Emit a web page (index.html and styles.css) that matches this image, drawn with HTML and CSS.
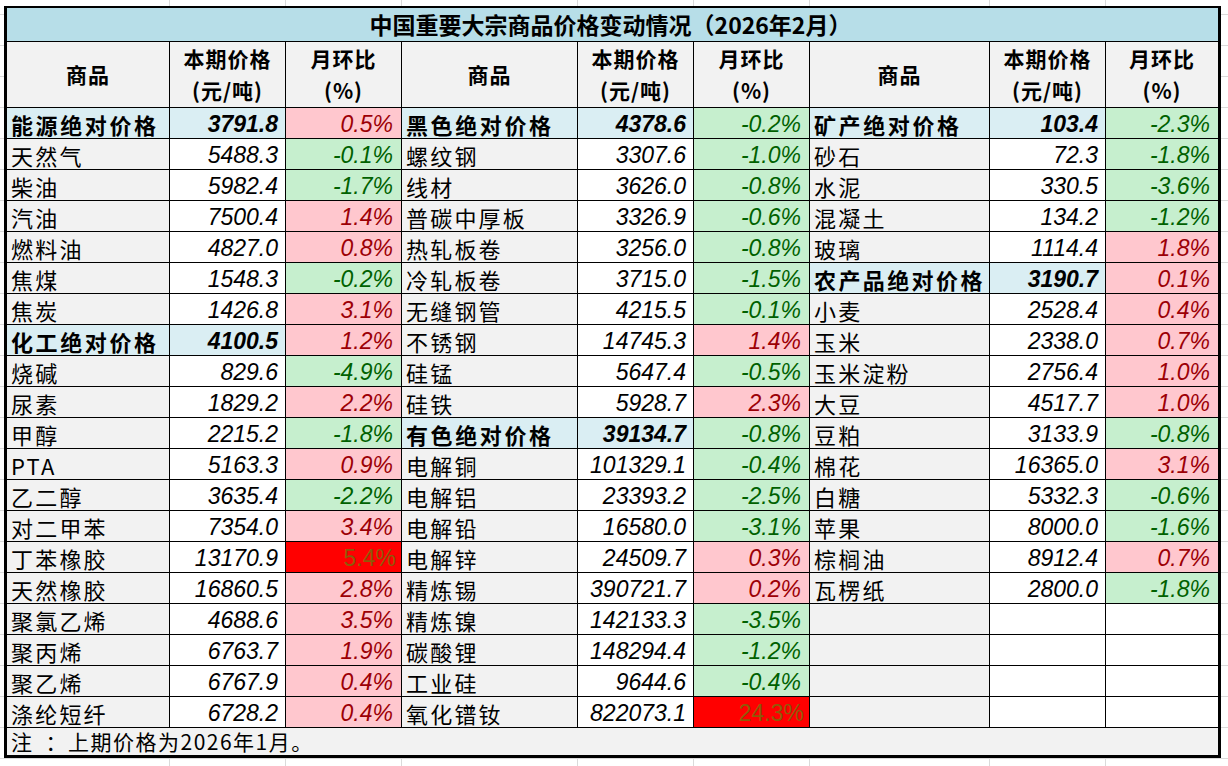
FILE: index.html
```html
<!DOCTYPE html>
<html lang="zh-CN">
<head>
<meta charset="utf-8">
<title>中国重要大宗商品价格变动情况（2026年2月）</title>
<link rel="stylesheet" href="styles.css">
</head>
<body>
<div class="sheet">
<table class="price-table">
<colgroup>
<col class="c-name"><col class="c-num"><col class="c-num">
<col class="c-name2"><col class="c-num"><col class="c-num">
<col class="c-name3"><col class="c-num"><col class="c-last">
</colgroup>
<tr class="title-row"><td colspan="9" class="title">中国重要大宗商品价格变动情况（2026年2月）</td></tr>
<tr class="head-row">
<th>商品</th><th>本期价格<br>(元/吨)</th><th>月环比<br>(%)</th>
<th>商品</th><th>本期价格<br>(元/吨)</th><th>月环比<br>(%)</th>
<th>商品</th><th>本期价格<br>(元/吨)</th><th>月环比<br>(%)</th>
</tr>
<tr>
<td class="name cat">能源绝对价格</td><td class="num cat">3791.8</td><td class="pct up">0.5%</td>
<td class="name cat">黑色绝对价格</td><td class="num cat">4378.6</td><td class="pct down">-0.2%</td>
<td class="name cat">矿产绝对价格</td><td class="num cat">103.4</td><td class="pct down">-2.3%</td>
</tr>
<tr>
<td class="name">天然气</td><td class="num">5488.3</td><td class="pct down">-0.1%</td>
<td class="name">螺纹钢</td><td class="num">3307.6</td><td class="pct down">-1.0%</td>
<td class="name">砂石</td><td class="num">72.3</td><td class="pct down">-1.8%</td>
</tr>
<tr>
<td class="name">柴油</td><td class="num">5982.4</td><td class="pct down">-1.7%</td>
<td class="name">线材</td><td class="num">3626.0</td><td class="pct down">-0.8%</td>
<td class="name">水泥</td><td class="num">330.5</td><td class="pct down">-3.6%</td>
</tr>
<tr>
<td class="name">汽油</td><td class="num">7500.4</td><td class="pct up">1.4%</td>
<td class="name">普碳中厚板</td><td class="num">3326.9</td><td class="pct down">-0.6%</td>
<td class="name">混凝土</td><td class="num">134.2</td><td class="pct down">-1.2%</td>
</tr>
<tr>
<td class="name">燃料油</td><td class="num">4827.0</td><td class="pct up">0.8%</td>
<td class="name">热轧板卷</td><td class="num">3256.0</td><td class="pct down">-0.8%</td>
<td class="name">玻璃</td><td class="num">1114.4</td><td class="pct up">1.8%</td>
</tr>
<tr>
<td class="name">焦煤</td><td class="num">1548.3</td><td class="pct down">-0.2%</td>
<td class="name">冷轧板卷</td><td class="num">3715.0</td><td class="pct down">-1.5%</td>
<td class="name cat wide">农产品绝对价格</td><td class="num cat">3190.7</td><td class="pct up">0.1%</td>
</tr>
<tr>
<td class="name">焦炭</td><td class="num">1426.8</td><td class="pct up">3.1%</td>
<td class="name">无缝钢管</td><td class="num">4215.5</td><td class="pct down">-0.1%</td>
<td class="name">小麦</td><td class="num">2528.4</td><td class="pct up">0.4%</td>
</tr>
<tr>
<td class="name cat">化工绝对价格</td><td class="num cat">4100.5</td><td class="pct up">1.2%</td>
<td class="name">不锈钢</td><td class="num">14745.3</td><td class="pct up">1.4%</td>
<td class="name">玉米</td><td class="num">2338.0</td><td class="pct up">0.7%</td>
</tr>
<tr>
<td class="name">烧碱</td><td class="num">829.6</td><td class="pct down">-4.9%</td>
<td class="name">硅锰</td><td class="num">5647.4</td><td class="pct down">-0.5%</td>
<td class="name">玉米淀粉</td><td class="num">2756.4</td><td class="pct up">1.0%</td>
</tr>
<tr>
<td class="name">尿素</td><td class="num">1829.2</td><td class="pct up">2.2%</td>
<td class="name">硅铁</td><td class="num">5928.7</td><td class="pct up">2.3%</td>
<td class="name">大豆</td><td class="num">4517.7</td><td class="pct up">1.0%</td>
</tr>
<tr>
<td class="name">甲醇</td><td class="num">2215.2</td><td class="pct down">-1.8%</td>
<td class="name cat">有色绝对价格</td><td class="num cat">39134.7</td><td class="pct down">-0.8%</td>
<td class="name">豆粕</td><td class="num">3133.9</td><td class="pct down">-0.8%</td>
</tr>
<tr>
<td class="name">PTA</td><td class="num">5163.3</td><td class="pct up">0.9%</td>
<td class="name">电解铜</td><td class="num">101329.1</td><td class="pct down">-0.4%</td>
<td class="name">棉花</td><td class="num">16365.0</td><td class="pct up">3.1%</td>
</tr>
<tr>
<td class="name">乙二醇</td><td class="num">3635.4</td><td class="pct down">-2.2%</td>
<td class="name">电解铝</td><td class="num">23393.2</td><td class="pct down">-2.5%</td>
<td class="name">白糖</td><td class="num">5332.3</td><td class="pct down">-0.6%</td>
</tr>
<tr>
<td class="name">对二甲苯</td><td class="num">7354.0</td><td class="pct up">3.4%</td>
<td class="name">电解铅</td><td class="num">16580.0</td><td class="pct down">-3.1%</td>
<td class="name">苹果</td><td class="num">8000.0</td><td class="pct down">-1.6%</td>
</tr>
<tr>
<td class="name">丁苯橡胶</td><td class="num">13170.9</td><td class="pct hot">5.4%</td>
<td class="name">电解锌</td><td class="num">24509.7</td><td class="pct up">0.3%</td>
<td class="name">棕榈油</td><td class="num">8912.4</td><td class="pct up">0.7%</td>
</tr>
<tr>
<td class="name">天然橡胶</td><td class="num">16860.5</td><td class="pct up">2.8%</td>
<td class="name">精炼锡</td><td class="num">390721.7</td><td class="pct up">0.2%</td>
<td class="name">瓦楞纸</td><td class="num">2800.0</td><td class="pct down">-1.8%</td>
</tr>
<tr>
<td class="name">聚氯乙烯</td><td class="num">4688.6</td><td class="pct up">3.5%</td>
<td class="name">精炼镍</td><td class="num">142133.3</td><td class="pct down">-3.5%</td>
<td class="name"></td><td class="num"></td><td class="pct"></td>
</tr>
<tr>
<td class="name">聚丙烯</td><td class="num">6763.7</td><td class="pct up">1.9%</td>
<td class="name">碳酸锂</td><td class="num">148294.4</td><td class="pct down">-1.2%</td>
<td class="name"></td><td class="num"></td><td class="pct"></td>
</tr>
<tr>
<td class="name">聚乙烯</td><td class="num">6767.9</td><td class="pct up">0.4%</td>
<td class="name">工业硅</td><td class="num">9644.6</td><td class="pct down">-0.4%</td>
<td class="name"></td><td class="num"></td><td class="pct"></td>
</tr>
<tr>
<td class="name">涤纶短纤</td><td class="num">6728.2</td><td class="pct up">0.4%</td>
<td class="name">氧化镨钕</td><td class="num">822073.1</td><td class="pct hot">24.3%</td>
<td class="name"></td><td class="num"></td><td class="pct"></td>
</tr>
<tr class="foot-row"><td colspan="9" class="foot">注&ensp;：上期价格为2026年1月。</td></tr>
</table>
</div>
</body>
</html>
```
FILE: styles.css
```css
html, body {
  margin: 0;
  padding: 0;
}

body {
  width: 1228px;
  height: 766px;
  overflow: hidden;
  background-color: #ffffff;
  background-image:
    linear-gradient(#dadada, #dadada),
    linear-gradient(#dadada, #dadada),
    linear-gradient(#dadada, #dadada),
    linear-gradient(#dadada, #dadada),
    linear-gradient(#dadada, #dadada),
    linear-gradient(#dadada, #dadada),
    linear-gradient(#dadada, #dadada),
    linear-gradient(#dadada, #dadada),
    repeating-linear-gradient(to bottom, transparent 0 30px, #dadada 30px 31px);
  background-size:
    1px 100%, 1px 100%, 1px 100%, 1px 100%,
    1px 100%, 1px 100%, 1px 100%, 1px 100%,
    100% 31px;
  background-position:
    169px 0, 285px 0, 401px 0, 577px 0,
    693px 0, 809px 0, 989px 0, 1105px 0,
    0 108px;
  background-repeat:
    no-repeat, no-repeat, no-repeat, no-repeat,
    no-repeat, no-repeat, no-repeat, no-repeat,
    repeat;
}

.sheet {
  padding: 6px 0 0 4px;
}

.price-table {
  border-collapse: collapse;
  table-layout: fixed;
  border: 3px solid #000;
  border-top-width: 2px;
  background: #fff;
  color: #000;
}

.c-name { width: 164px; }
.c-num { width: 116px; }
.c-name2 { width: 176px; }
.c-name3 { width: 180px; }
.c-last { width: 114px; }

.price-table td,
.price-table th {
  border: 1px solid #000;
  padding: 0;
  overflow: hidden;
  white-space: nowrap;
  vertical-align: middle;
}

.price-table tr {
  height: 31px;
}

.price-table tr.title-row {
  height: 34px;
}

.price-table tr.head-row {
  height: 66px;
}

.price-table tr.foot-row {
  height: 29px;
}

.title {
  background: #b7dee8;
  text-align: center;
  font-family: "Noto Sans CJK SC", sans-serif;
  font-weight: bold;
  font-size: 23px;
  line-height: 26px;
  padding-right: 4px !important;
}

.head-row th {
  background: #f2f2f2;
  font-family: "Noto Sans CJK SC", sans-serif;
  font-weight: bold;
  font-size: 21px;
  line-height: 32px;
  letter-spacing: 1px;
  text-align: center;
}

.name {
  background: #f2f2f2;
  font-family: "Noto Sans CJK SC", sans-serif;
  font-size: 22px;
  line-height: 24px;
  letter-spacing: 2.2px;
  padding-left: 4px !important;
  padding-top: 2px !important;
  text-align: left;
}

.name.cat {
  background: #daeef3;
  font-weight: bold;
  letter-spacing: 2.6px;
}

.name.cat.wide {
  letter-spacing: 2.4px;
}

.num,
.pct {
  font-family: "Liberation Sans", Arial, sans-serif;
  font-style: italic;
  font-size: 23px;
  line-height: 24px;
  text-align: right;
  padding-right: 7px !important;
  padding-top: 2px !important;
}

.num {
  background: #fff;
}

.num.cat {
  background: #daeef3;
  font-weight: bold;
}

.pct {
  padding-right: 8px !important;
  background: #fff;
}

.pct.up {
  background: #ffc7ce;
  color: #9c0006;
}

.pct.down {
  background: #c6efce;
  color: #006100;
}

.pct.hot {
  background: #ff0000;
  color: #8f5a08;
  font-style: normal;
  padding-right: 5px !important;
}

.foot {
  background: #f2f2f2;
  font-family: "Noto Sans CJK SC", sans-serif;
  font-size: 21px;
  line-height: 24px;
  letter-spacing: 1.5px;
  text-align: left;
  padding-left: 4px !important;
}
```
